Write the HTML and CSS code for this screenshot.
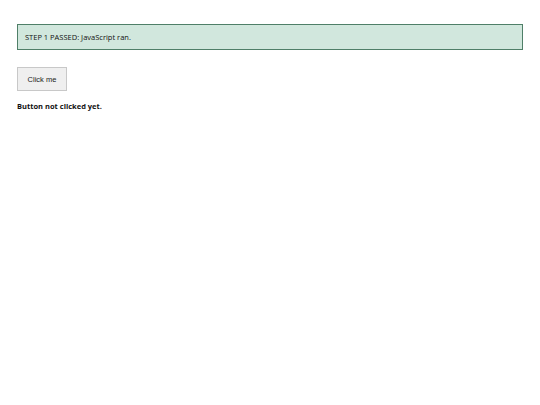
FILE: index.html
```html
<!DOCTYPE html>
<html>
<head>
<meta charset="utf-8">
<link rel="stylesheet" href="styles.css">
</head>
<body>
<div class="status">STEP 1 PASSED: JavaScript ran.</div>
<button class="btn" type="button">Click me</button>
<p class="result">Button not clicked yet.</p>
</body>
</html>
```
FILE: styles.css
```css
html, body { margin: 0; padding: 0; background: #fff; }
body {
  padding: 24px 17px;
  font-family: "Open Sans", sans-serif;
  font-size: 7.5px;
  color: #111;
}
.status {
  box-sizing: border-box;
  height: 26px;
  padding: 0 7px;
  display: flex;
  align-items: center;
  background: #d1e7dd;
  border: 1px solid #4f7f68;
}
.btn {
  display: block;
  margin-top: 17px;
  width: 50px;
  height: 24px;
  padding: 0;
  font-family: "Liberation Sans", Arial, sans-serif;
  font-size: 7.5px;
  color: #222;
  background: #efefef;
  border: 1px solid #c8c8c8;
  border-radius: 0;
}
.result {
  margin: 10px 0 0;
  font-weight: 700;
  line-height: 10px;
}
```
